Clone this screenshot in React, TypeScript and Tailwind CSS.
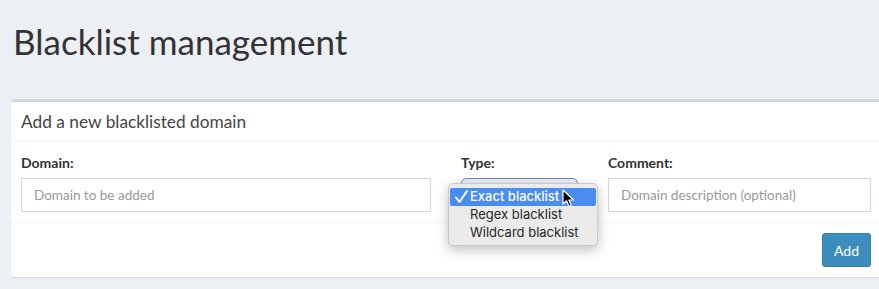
import React from "react";

function Cursor() {
  return (
    <svg width="13" height="19" viewBox="0 0 13 19" className="absolute left-[113px] top-[5px]">
      <path d="M1 1 L1 15 L4.5 11.8 L7 17.5 L9.3 16.5 L6.9 11 L11.5 11 Z" fill="#000" stroke="#fff" strokeWidth="1.2" strokeLinejoin="round" />
    </svg>
  );
}

export default function App() {
  return (
    <div className="w-[879px] h-[289px] overflow-hidden bg-[#ecf0f5] font-['Lato',sans-serif] text-[#333]">
      <div className="h-[99px] pl-[13px] pt-[21px]">
        <h1 className="text-[35px] leading-[40px] font-normal text-[#333]">Blacklist management</h1>
      </div>
      <div className="ml-[11px] w-[870px] bg-white border-t-[3px] border-[#d2d6de] shadow-[0_1px_1px_rgba(0,0,0,0.1)] rounded-[3px]">
        <div className="h-[40px] flex items-center px-[10px] border-b border-[#f4f4f4]">
          <h3 className="text-[17.3px] leading-none text-[#444]">Add a new blacklisted domain</h3>
        </div>
        <div className="p-[10px]">
          <div className="grid grid-cols-[410px_117px_263px] gap-x-[30px]">
            <div>
              <label className="block text-[14px] leading-[20px] font-bold mb-[5px] pt-[1px]">Domain:</label>
              <div className="h-[34px] border border-[#d2d6de] px-[12px] flex items-center text-[13.5px] text-[#999]">Domain to be added</div>
            </div>
            <div className="relative">
              <label className="block text-[14px] leading-[20px] font-bold mb-[5px] pt-[1px]">Type:</label>
              <div className="h-[34px] border border-[#6f8aa3] rounded-[5px] bg-[#e8ecf1]"></div>
              <div className="absolute left-[-13px] top-[31px] w-[150px] h-[63px] rounded-[5px] bg-[#ebebeb] border border-[#c9c9c9] shadow-[0_4px_12px_rgba(0,0,0,0.25)] py-[4px] px-[1px] font-['Inter',sans-serif] text-[13px] text-[#262626]">
                <div className="h-[18px] bg-[#4b8cf0] text-white font-medium flex items-center rounded-[2px]">
                  <span className="w-[20px] h-[18px] flex items-center">
                    <svg width="20" height="18" viewBox="0 0 20 18">
                      <path d="M6 9.5 L9.5 14 L17 3" fill="none" stroke="#fff" strokeWidth="2" strokeLinecap="round" strokeLinejoin="round" />
                    </svg>
                  </span>
                  <span>Exact blacklist</span>
                </div>
                <div className="h-[18px] flex items-center pl-[20px]">Regex blacklist</div>
                <div className="h-[18px] flex items-center pl-[20px]">Wildcard blacklist</div>
                <Cursor />
              </div>
            </div>
            <div>
              <label className="block text-[14px] leading-[20px] font-bold mb-[5px] pt-[1px]">Comment:</label>
              <div className="h-[34px] border border-[#d2d6de] px-[12px] flex items-center text-[13.5px] text-[#999]">Domain description (optional)</div>
            </div>
          </div>
        </div>
        <div className="border-t border-[#f4f4f4] p-[10px] flex justify-end">
          <button className="h-[34px] w-[49px] bg-[#3c8dbc] border border-[#367fa9] rounded-[3px] text-white text-[14px]">Add</button>
        </div>
      </div>
    </div>
  );
}
